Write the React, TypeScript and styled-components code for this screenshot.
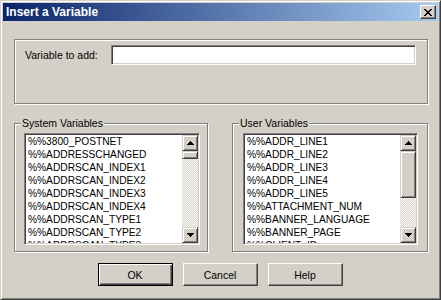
import React from "react";
import styled, { createGlobalStyle } from "styled-components";

const systemVariables = [
  "%%3800_POSTNET",
  "%%ADDRESSCHANGED",
  "%%ADDRSCAN_INDEX1",
  "%%ADDRSCAN_INDEX2",
  "%%ADDRSCAN_INDEX3",
  "%%ADDRSCAN_INDEX4",
  "%%ADDRSCAN_TYPE1",
  "%%ADDRSCAN_TYPE2",
  "%%ADDRSCAN_TYPE3",
];

const userVariables = [
  "%%ADDR_LINE1",
  "%%ADDR_LINE2",
  "%%ADDR_LINE3",
  "%%ADDR_LINE4",
  "%%ADDR_LINE5",
  "%%ATTACHMENT_NUM",
  "%%BANNER_LANGUAGE",
  "%%BANNER_PAGE",
  "%%CLIENT_ID",
];

const GlobalStyle = createGlobalStyle`
  html, body {
    margin: 0;
    padding: 0;
    background: #d4d0c8;
  }
  * {
    box-sizing: border-box;
  }
`;

const Window = styled.div`
  width: 441px;
  height: 300px;
  background: #d4d0c8;
  border: 1px solid;
  border-color: #d4d0c8 #404040 #404040 #d4d0c8;
  box-shadow: inset 1px 1px 0 #ffffff, inset -1px -1px 0 #808080;
  padding: 2px;
  display: flex;
  flex-direction: column;
  font-family: "Liberation Sans", Arial, sans-serif;
  font-size: 10.5px;
  color: #000;
`;

const TitleBar = styled.div`
  height: 18px;
  display: flex;
  align-items: center;
  justify-content: space-between;
  padding: 0 2px 0 2px;
  background: linear-gradient(to right, #0a246a, #a6caf0);
`;

const Title = styled.span`
  color: #fff;
  font-weight: bold;
  font-size: 12px;
  line-height: 18px;
  padding-left: 1px;
`;

const CaptionButton = styled.div`
  width: 16px;
  height: 14px;
  background: #d4d0c8;
  border: 1px solid;
  border-color: #ffffff #404040 #404040 #ffffff;
  box-shadow: inset -1px -1px 0 #808080;
  display: flex;
  align-items: center;
  justify-content: center;
`;

const Body = styled.div`
  flex: 1;
  display: flex;
  flex-direction: column;
  padding: 18px 10px 0 11px;
`;

const Group = styled.div<{ $w?: number; $h: number }>`
  position: relative;
  width: ${(p) => (p.$w ? `${p.$w}px` : "auto")};
  height: ${(p) => p.$h}px;
  border: 1px solid #808080;
  box-shadow: inset 1px 1px 0 #ffffff, 1px 1px 0 #ffffff;
`;

const Legend = styled.span`
  position: absolute;
  top: -7px;
  left: 6px;
  padding: 0 1px;
  background: #d4d0c8;
  line-height: 13px;
`;

const FieldRow = styled.div`
  display: flex;
  align-items: center;
  padding: 5px 11px 0 10px;
`;

const Label = styled.label`
  width: 86px;
  line-height: 20px;
`;

const TextInput = styled.div`
  flex: 1;
  height: 20px;
  background: #fff;
  border: 1px solid;
  border-color: #808080 #ffffff #ffffff #808080;
  box-shadow: inset 1px 1px 0 #404040, inset -1px -1px 0 #d4d0c8;
`;

const ListsRow = styled.div`
  display: flex;
  gap: 24px;
  margin-top: 19px;
`;

const GroupInner = styled.div<{ $pl: number; $pr: number }>`
  padding: 9px ${(p) => p.$pr}px 0 ${(p) => p.$pl}px;
`;

const ListBox = styled.div`
  height: 112px;
  display: flex;
  background: #fff;
  border: 1px solid;
  border-color: #808080 #ffffff #ffffff #808080;
  box-shadow: inset 1px 1px 0 #404040, inset -1px -1px 0 #d4d0c8;
  padding: 1px;
  overflow: hidden;
`;

const Items = styled.div`
  flex: 1;
  overflow: hidden;
  padding-left: 2px;
  font-size: 10.2px;
`;

const Item = styled.div`
  height: 13px;
  line-height: 13px;
  white-space: nowrap;
`;

const ScrollBar = styled.div`
  width: 16px;
  display: flex;
  flex-direction: column;
`;

const ScrollButton = styled.div`
  width: 16px;
  height: 16px;
  flex: none;
  background: #d4d0c8;
  border: 1px solid;
  border-color: #d4d0c8 #404040 #404040 #d4d0c8;
  box-shadow: inset 1px 1px 0 #ffffff, inset -1px -1px 0 #808080;
  display: flex;
  align-items: center;
  justify-content: center;
`;

const Track = styled.div`
  flex: 1;
  display: flex;
  flex-direction: column;
  background-color: #d4d0c8;
  background-image: repeating-conic-gradient(#ffffff 0 25%, #d4d0c8 0 50%);
  background-size: 2px 2px;
`;

const Thumb = styled.div<{ $h: number }>`
  height: ${(p) => p.$h}px;
  background: #d4d0c8;
  border: 1px solid;
  border-color: #d4d0c8 #404040 #404040 #d4d0c8;
  box-shadow: inset 1px 1px 0 #ffffff, inset -1px -1px 0 #808080;
`;

const ButtonRow = styled.div`
  display: flex;
  justify-content: center;
  gap: 10px;
  margin-top: 11px;
  padding-right: 2px;
`;

const PushButton = styled.div<{ $default?: boolean }>`
  width: 75px;
  height: 23px;
  display: flex;
  align-items: center;
  justify-content: center;
  background: #d4d0c8;
  border: 1px solid;
  border-color: ${(p) =>
    p.$default ? "#000" : "#ffffff #404040 #404040 #ffffff"};
  box-shadow: ${(p) =>
    p.$default
      ? "inset 1px 1px 0 #ffffff, inset -1px -1px 0 #404040, inset -2px -2px 0 #808080"
      : "inset -1px -1px 0 #808080"};
`;

const Arrow: React.FC<{ up?: boolean }> = ({ up }) => (
  <svg width="7" height="4" viewBox="0 0 7 4" style={{ display: "block" }}>
    {up ? (
      <path d="M3 0h1v1h1v1h1v1h1v1H0V3h1V2h1V1h1z" fill="#000" />
    ) : (
      <path d="M0 0h7v1H6v1H5v1H4v1H3V3H2V2H1V1H0z" fill="#000" />
    )}
  </svg>
);

const VariableList: React.FC<{ items: string[]; thumb: number }> = ({
  items,
  thumb,
}) => (
  <ListBox>
    <Items>
      {items.map((v) => (
        <Item key={v}>{v}</Item>
      ))}
    </Items>
    <ScrollBar>
      <ScrollButton>
        <Arrow up />
      </ScrollButton>
      <Track>
        <Thumb $h={thumb} />
      </Track>
      <ScrollButton>
        <Arrow />
      </ScrollButton>
    </ScrollBar>
  </ListBox>
);

export default function App() {
  return (
    <>
      <GlobalStyle />
      <Window>
        <TitleBar>
          <Title>Insert a Variable</Title>
          <CaptionButton>
            <svg width="8" height="7" viewBox="0 0 8 7" style={{ display: "block" }}>
              <path
                d="M0 0h2v1h1v1h2V1h1V0h2v1H7v1H6v1H5v1h1v1h1v1h1v1H6V6H5V5H3v1H2v1H0V6h1V5h1V4h1V3H2V2H1V1H0z"
                fill="#000"
              />
            </svg>
          </CaptionButton>
        </TitleBar>
        <Body>
          <Group $h={65}>
            <FieldRow>
              <Label>Variable to add:</Label>
              <TextInput />
            </FieldRow>
          </Group>
          <ListsRow>
            <Group $w={194} $h={129}>
              <Legend>System Variables</Legend>
              <GroupInner $pl={9} $pr={7}>
                <VariableList items={systemVariables} thumb={8} />
              </GroupInner>
            </Group>
            <Group $w={196} $h={129}>
              <Legend>User Variables</Legend>
              <GroupInner $pl={10} $pr={9}>
                <VariableList items={userVariables} thumb={47} />
              </GroupInner>
            </Group>
          </ListsRow>
          <ButtonRow>
            <PushButton $default>OK</PushButton>
            <PushButton>Cancel</PushButton>
            <PushButton>Help</PushButton>
          </ButtonRow>
        </Body>
      </Window>
    </>
  );
}
